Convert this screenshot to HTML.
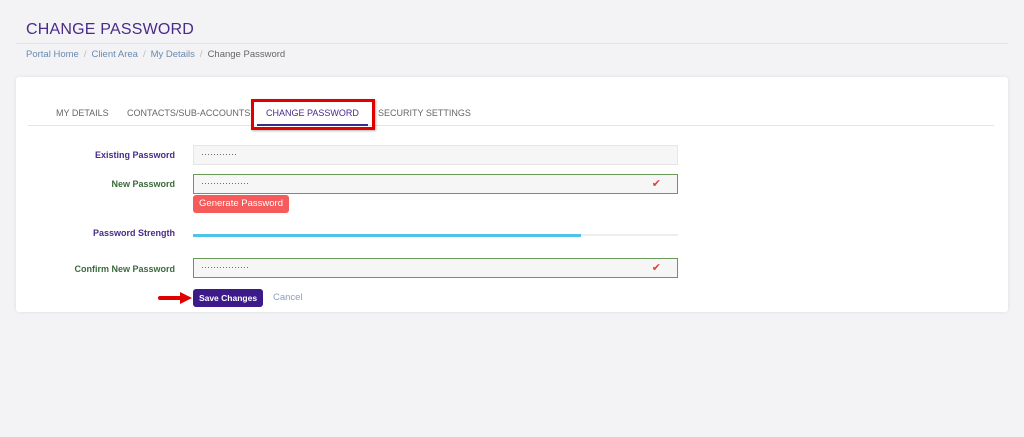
<!DOCTYPE html>
<html><head><style>
*{box-sizing:border-box;margin:0;padding:0}
body{width:1024px;height:437px;background:#f3f3f5;font-family:"Liberation Sans",sans-serif;position:relative;overflow:hidden}
.t{position:absolute;white-space:nowrap}
h1{position:absolute;left:26px;top:21px;font-size:16px;font-weight:normal;color:#4a2a8a;letter-spacing:.2px}
.hr{position:absolute;left:16px;top:43px;width:992px;height:1px;background:#e2e2e6}
.bc{position:absolute;left:26px;top:49px;font-size:9.5px;color:#6a8ab0;white-space:nowrap}
.bc span.s{color:#bbb;margin:0 5px}
.bc .c{color:#666}
.card{position:absolute;left:16px;top:77px;width:992px;height:235px;background:#fff;border-radius:3px;box-shadow:0 0 3px rgba(0,0,0,.1)}
.tabs{position:absolute;left:28px;top:125px;width:966px;height:1px;background:#e5e5e5}
.tab{position:absolute;top:108px;font-size:9px;color:#666;white-space:nowrap}
.lbl{position:absolute;font-size:9px;font-weight:bold;text-align:right;width:135px;left:40px}
.inp{position:absolute;left:193px;width:485px;height:20px;background:#f6f6f6;border:1px solid #e6e6e6;font-size:9px;color:#555;padding:3px 7px}
.g{border-color:#6a9a5a}
.ck{position:absolute;right:16px;top:2px;color:#e04040;font-size:11px}
</style></head><body>
<h1>CHANGE PASSWORD</h1>
<div class="hr"></div>
<div class="bc">Portal Home<span class="s">/</span>Client Area<span class="s">/</span>My Details<span class="s">/</span><span class="c">Change Password</span></div>
<div class="card"></div>
<div class="tabs"></div>
<div class="tab" style="left:56px">MY DETAILS</div>
<div class="tab" style="left:127px">CONTACTS/SUB-ACCOUNTS</div>
<div class="tab" style="left:266px;color:#4a2a8a">CHANGE PASSWORD</div>
<div class="t" style="left:257px;top:124px;width:111px;height:2px;background:#3a2a8a"></div>
<div class="t" style="left:251px;top:99px;width:124px;height:31px;border:3px solid #e00000;box-shadow:1px 1px 2px rgba(0,0,0,.3)"></div>
<div class="tab" style="left:378px">SECURITY SETTINGS</div>

<div class="lbl" style="top:150px;color:#4a2a8a">Existing Password</div>
<div class="inp" style="top:145px">············</div>
<div class="lbl" style="top:179px;color:#3a6a3a">New Password</div>
<div class="inp g" style="top:174px">················<span class="ck">✔</span></div>
<div class="t" style="left:193px;top:195px;width:96px;height:18px;background:#f55b5b;border-radius:3px;color:#fff;font-size:9.5px;line-height:18px;text-align:center">Generate Password</div>
<div class="lbl" style="top:228px;color:#4a2a8a">Password Strength</div>
<div class="t" style="left:193px;top:234px;width:485px;height:2px;background:#eee"></div>
<div class="t" style="left:193px;top:234px;width:388px;height:3px;background:#50c4e8"></div>
<div class="lbl" style="top:264px;color:#3a6a3a">Confirm New Password</div>
<div class="inp g" style="top:258px">················<span class="ck">✔</span></div>
<svg class="t" style="left:158px;top:291px" width="36" height="14"><path d="M2 7 H24" stroke="#e00000" stroke-width="4" stroke-linecap="round"/><path d="M22 1 L34 7 L22 13 Z" fill="#e00000"/></svg>
<div class="t" style="left:193px;top:289px;width:70px;height:18px;background:#3c1a8a;border-radius:3px;color:#fff;font-size:8.5px;font-weight:bold;text-align:center;line-height:18px">Save Changes</div>
<div class="t" style="left:273px;top:292px;font-size:9.5px;color:#8aa0c0">Cancel</div>
</body></html>
